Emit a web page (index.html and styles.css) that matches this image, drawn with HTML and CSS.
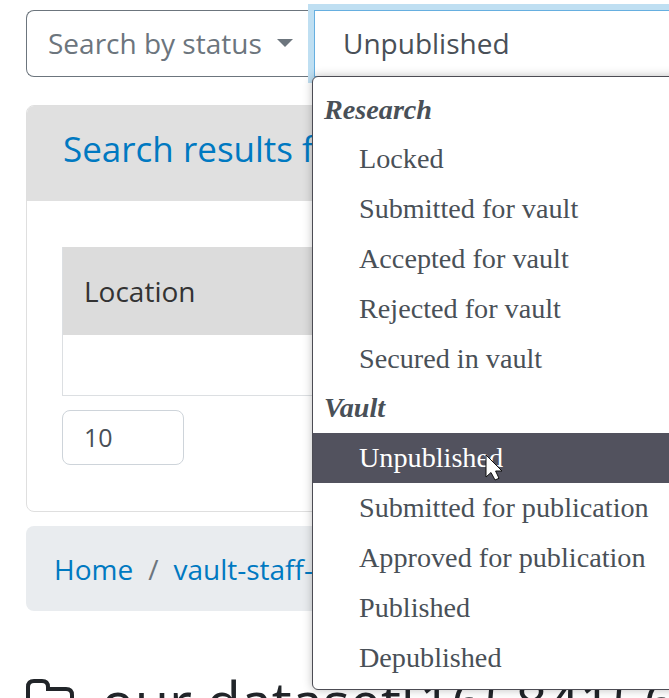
FILE: index.html
```html
<!DOCTYPE html>
<html lang="en">
<head>
<meta charset="utf-8">
<title>Search</title>
<link rel="stylesheet" href="styles.css">
</head>
<body>
<main class="page">
  <div class="search-group">
    <button class="search-type">Search by status<span class="caret"></span></button>
    <div class="status-select">Unpublished
      <div class="menu">
        <div class="group">Research</div>
        <div class="option">Locked</div>
        <div class="option">Submitted for vault</div>
        <div class="option">Accepted for vault</div>
        <div class="option">Rejected for vault</div>
        <div class="option">Secured in vault</div>
        <div class="group">Vault</div>
        <div class="option active">Unpublished
          <svg class="cursor" width="20" height="28" viewBox="0 0 20 28"><path d="M1 1V23L6 18.5L10 26L14 24.3L10.6 17H17Z" fill="#fff" stroke="#111" stroke-width="1"/></svg>
        </div>
        <div class="option">Submitted for publication</div>
        <div class="option">Approved for publication</div>
        <div class="option">Published</div>
        <div class="option">Depublished</div>
      </div>
    </div>
  </div>
  <section class="card">
    <h2 class="card-header">Search results f</h2>
    <div class="card-body">
      <div class="table">
        <div class="th">Location</div>
        <div class="td"></div>
      </div>
      <div class="length">10</div>
    </div>
  </section>
  <nav class="breadcrumb"><a>Home</a><span class="slash">/</span><a>vault-staff-</a></nav>
  <h1 class="title">
    <svg class="folder" width="50" height="50" viewBox="0 0 50 50"><path d="M2 45V8Q2 2 8 2H16Q22 2 22 8V10H40Q46 10 46 16V45Z" fill="none" stroke="#212529" stroke-width="4"/></svg>
    <span class="name">our dataset[16584156</span>
  </h1>
</main>
</body>
</html>
```
FILE: styles.css
```css
* { box-sizing: border-box; }
body { margin: 0; height: 698px; overflow: hidden; background: #fff; font: 28px/42px "Open Sans", sans-serif; color: #212529; }
.page { width: 669px; height: 698px; overflow: hidden; padding: 10px 0 0 26px; }
.search-group { display: flex; width: 700px; height: 67px; }
.search-type { display: flex; align-items: center; width: 288px; padding: 0 0 2px 21px; border: 1px solid #6c757d; border-right: 0; border-radius: 8px 0 0 8px; background: #fff; font: inherit; color: #6c757d; }
.caret { margin-left: 15px; border: 8px solid transparent; border-top-color: #6c757d; border-bottom: 0; }
.status-select { position: relative; flex: 1; padding: 11px 28px; border: 1px solid #66afe0; box-shadow: 0 0 0 6px #bfdff2; color: #495057; }
.menu { position: absolute; z-index: 2; top: 65px; left: -3px; width: 500px; height: 614px; padding: 8px 0; border: 1px solid #4c4c54; border-radius: 6px; background: #fff; box-shadow: 0 0 10px rgba(0, 0, 0, .25); font: 28.2px/50px "Liberation Serif", serif; }
.group { padding-left: 11px; height: 49px; font-weight: bold; font-style: italic; }
.option { position: relative; padding-left: 46px; height: 50px; white-space: nowrap; }
.option + .group { line-height: 48px; }
.active { background: #52525e; color: #fff; }
.cursor { position: absolute; left: 172px; top: 21px; }
.card { width: 700px; height: 407px; margin-top: 28px; border: 1px solid #dfdfdf; border-radius: 8px; overflow: hidden; }
.card-header { margin: 0; height: 95px; padding: 17px 36px; background: #e0e0e0; font-size: 35px; line-height: 52px; font-weight: 400; color: #0079c1; }
.card-body { padding: 46px 35px; }
.table { border: 1px solid #dcdfe2; border-top: 0; }
.th { height: 88px; padding: 23px 21px; background: #dcdcdc; color: #333; }
.td { height: 60px; }
.length { width: 122px; height: 55px; margin-top: 14px; padding: 5px 21px; border: 1px solid #ced4da; border-radius: 8px; font-size: 25px; color: #495057; }
.breadcrumb { display: flex; gap: 15px; width: 700px; height: 85px; margin-top: 14px; padding: 22px 28px; border-radius: 8px; background: #e9ecef; color: #0079c1; }
.slash { color: #6c757d; }
.title { display: flex; margin: 68px 0 0; font-size: 56px; line-height: 67px; font-weight: 500; white-space: nowrap; }
.folder { flex: none; margin-right: 25px; }
.name { margin-top: -11px; }
```
